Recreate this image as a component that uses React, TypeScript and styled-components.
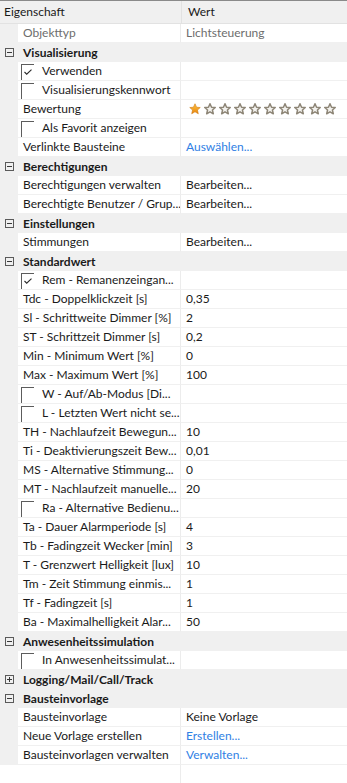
import React from "react";
import styled, { createGlobalStyle } from "styled-components";

const Global = createGlobalStyle`
  html, body { margin: 0; padding: 0; background: #ffffff; }
  body { font-family: Lato, "Noto Sans", sans-serif; font-size: 12px; color: #1a1a1a; }
  * { box-sizing: border-box; }
`;

const ROW_H = 19;
const LABEL_W = 181;
const GUTTER = 18;

const Grid = styled.div`
  width: 347px;
  min-height: 783px;
  display: flex;
  flex-direction: column;
  border-top: 1px solid #8a8a8a;
  background: #ffffff;
`;

const Header = styled.div`
  display: grid;
  grid-template-columns: ${LABEL_W}px 1fr;
  height: 22.5px;
  background: #f0f0f0;
  border-bottom: 1px solid #e2e2e2;
`;

const HeaderCell = styled.div<{ $divider?: boolean }>`
  display: flex;
  align-items: center;
  padding-left: ${(p) => (p.$divider ? "6px" : "4px")};
  border-left: ${(p) => (p.$divider ? "1px solid #e2e2e2" : "none")};
  color: #1a1a1a;
`;

const GroupRow = styled.div`
  display: flex;
  align-items: center;
  height: ${ROW_H}px;
  background: #f0f0f0;
`;

const Toggle = styled.span`
  width: ${GUTTER + 5}px;
  display: flex;
  align-items: center;
  padding-left: 5px;
`;

const ToggleBox = styled.span`
  position: relative;
  width: 9px;
  height: 9px;
  border: 1px solid #5a5a5a;
  display: inline-block;
`;

const ToggleBar = styled.span<{ $vertical?: boolean }>`
  position: absolute;
  background: #3a3a3a;
  ${(p) =>
    p.$vertical
      ? "left: 3px; top: 1px; width: 1px; height: 5px;"
      : "left: 1px; top: 3px; width: 5px; height: 1px;"}
`;

const GroupTitle = styled.span`
  font-weight: 700;
  color: #1a1a1a;
`;

const DataRow = styled.div`
  display: grid;
  grid-template-columns: ${GUTTER}px ${LABEL_W - GUTTER}px 1fr;
  height: ${ROW_H}px;
  background: #f0f0f0;
`;

const Gutter = styled.div`
  background: #f0f0f0;
`;

const LabelCell = styled.div<{ $muted?: boolean }>`
  display: flex;
  align-items: center;
  background: #ffffff;
  border-bottom: 1px solid #f0f0f0;
  border-right: 1px solid #ececec;
  padding-left: 5px;
  white-space: nowrap;
  overflow: hidden;
  color: ${(p) => (p.$muted ? "#6d6d6d" : "#1a1a1a")};
`;

const ValueCell = styled.div<{ $tone?: "muted" | "link" | "normal" }>`
  display: flex;
  align-items: center;
  background: #ffffff;
  border-bottom: 1px solid #f0f0f0;
  padding-left: 5px;
  white-space: nowrap;
  overflow: hidden;
  color: ${(p) =>
    p.$tone === "muted" ? "#6d6d6d" : p.$tone === "link" ? "#2f80e4" : "#1a1a1a"};
`;

const CheckBox = styled.span`
  position: relative;
  width: 13px;
  height: 16px;
  margin-top: 2px;
  align-self: flex-start;
  border-top: 1px solid #5c5c5c;
  border-left: 1px solid #5c5c5c;
  margin-right: 8px;
  margin-left: -2px;
  flex-shrink: 0;
`;

const CheckMark = styled.svg`
  position: absolute;
  left: 2px;
  top: 4px;
`;

const Stars = styled.div`
  display: flex;
  gap: 3px;
  align-items: center;
  padding-top: 1px;
  padding-left: 3px;
`;

const Filler = styled.div`
  flex: 1;
  display: grid;
  grid-template-columns: ${LABEL_W}px 1fr;
`;

const FillerLeft = styled.div`
  border-right: 1px solid #ececec;
`;

type Row =
  | { kind: "group"; title: string; collapsed?: boolean }
  | {
      kind: "prop";
      label: string;
      value?: string;
      tone?: "muted" | "link" | "normal";
      check?: boolean;
      mutedLabel?: boolean;
      stars?: boolean;
    };

const rows: Row[] = [
  { kind: "prop", label: "Objekttyp", value: "Lichtsteuerung", tone: "muted", mutedLabel: true },
  { kind: "group", title: "Visualisierung" },
  { kind: "prop", label: "Verwenden", check: true },
  { kind: "prop", label: "Visualisierungskennwort", check: false },
  { kind: "prop", label: "Bewertung", stars: true },
  { kind: "prop", label: "Als Favorit anzeigen", check: false },
  { kind: "prop", label: "Verlinkte Bausteine", value: "Auswählen...", tone: "link" },
  { kind: "group", title: "Berechtigungen" },
  { kind: "prop", label: "Berechtigungen verwalten", value: "Bearbeiten..." },
  { kind: "prop", label: "Berechtigte Benutzer / Grup...", value: "Bearbeiten..." },
  { kind: "group", title: "Einstellungen" },
  { kind: "prop", label: "Stimmungen", value: "Bearbeiten..." },
  { kind: "group", title: "Standardwert" },
  { kind: "prop", label: "Rem - Remanenzeingan...", check: true },
  { kind: "prop", label: "Tdc - Doppelklickzeit [s]", value: "0,35" },
  { kind: "prop", label: "Sl - Schrittweite Dimmer [%]", value: "2" },
  { kind: "prop", label: "ST - Schrittzeit Dimmer [s]", value: "0,2" },
  { kind: "prop", label: "Min - Minimum Wert [%]", value: "0" },
  { kind: "prop", label: "Max - Maximum Wert [%]", value: "100" },
  { kind: "prop", label: "W - Auf/Ab-Modus [Di...", check: false },
  { kind: "prop", label: "L - Letzten Wert nicht se...", check: false },
  { kind: "prop", label: "TH - Nachlaufzeit Bewegun...", value: "10" },
  { kind: "prop", label: "Ti - Deaktivierungszeit Bew...", value: "0,01" },
  { kind: "prop", label: "MS - Alternative Stimmung...", value: "0" },
  { kind: "prop", label: "MT - Nachlaufzeit manuelle...", value: "20" },
  { kind: "prop", label: "Ra - Alternative Bedienu...", check: false },
  { kind: "prop", label: "Ta - Dauer Alarmperiode [s]", value: "4" },
  { kind: "prop", label: "Tb - Fadingzeit Wecker [min]", value: "3" },
  { kind: "prop", label: "T - Grenzwert Helligkeit [lux]", value: "10" },
  { kind: "prop", label: "Tm - Zeit Stimmung einmis...", value: "1" },
  { kind: "prop", label: "Tf - Fadingzeit [s]", value: "1" },
  { kind: "prop", label: "Ba - Maximalhelligkeit Alar...", value: "50" },
  { kind: "group", title: "Anwesenheitssimulation" },
  { kind: "prop", label: "In Anwesenheitssimulat...", check: false },
  { kind: "group", title: "Logging/Mail/Call/Track", collapsed: true },
  { kind: "group", title: "Bausteinvorlage" },
  { kind: "prop", label: "Bausteinvorlage", value: "Keine Vorlage" },
  { kind: "prop", label: "Neue Vorlage erstellen", value: "Erstellen...", tone: "link" },
  { kind: "prop", label: "Bausteinvorlagen verwalten", value: "Verwalten...", tone: "link" },
];

const Star = ({ filled }: { filled: boolean }) => (
  <svg width="12" height="12" viewBox="0 0 24 24">
    <defs>
      <linearGradient id="gold" x1="0" y1="0" x2="0" y2="1">
        <stop offset="0" stopColor="#ffc341" />
        <stop offset="1" stopColor="#e8850c" />
      </linearGradient>
    </defs>
    <path
      d="M12 1.5l3.1 6.9 7.4.7-5.6 5 1.7 7.4L12 17.6l-6.6 3.9 1.7-7.4-5.6-5 7.4-.7z"
      fill={filled ? "url(#gold)" : "#f3f2ee"}
      stroke={filled ? "#d07a10" : "#8e8677"}
      strokeWidth={filled ? 1.2 : 3}
      strokeLinejoin="round"
    />
  </svg>
);

export default function App() {
  return (
    <>
      <Global />
      <Grid>
        <Header>
          <HeaderCell>Eigenschaft</HeaderCell>
          <HeaderCell $divider>Wert</HeaderCell>
        </Header>
        {rows.map((r, i) =>
          r.kind === "group" ? (
            <GroupRow key={i}>
              <Toggle>
                <ToggleBox>
                  <ToggleBar />
                  {r.collapsed && <ToggleBar $vertical />}
                </ToggleBox>
              </Toggle>
              <GroupTitle>{r.title}</GroupTitle>
            </GroupRow>
          ) : (
            <DataRow key={i}>
              <Gutter />
              <LabelCell $muted={r.mutedLabel}>
                {r.check !== undefined && (
                  <CheckBox>
                    {r.check && (
                      <CheckMark width="8" height="6" viewBox="0 0 8 6">
                        <path d="M0.5 3l2.2 2.2L7.5 0.6" fill="none" stroke="#2b2b2b" strokeWidth="1.1" />
                      </CheckMark>
                    )}
                  </CheckBox>
                )}
                {r.label}
              </LabelCell>
              <ValueCell $tone={r.tone}>
                {r.stars ? (
                  <Stars>
                    {Array.from({ length: 10 }).map((_, k) => (
                      <Star key={k} filled={k === 0} />
                    ))}
                  </Stars>
                ) : (
                  r.value
                )}
              </ValueCell>
            </DataRow>
          )
        )}
        <Filler>
          <FillerLeft />
          <div />
        </Filler>
      </Grid>
    </>
  );
}
